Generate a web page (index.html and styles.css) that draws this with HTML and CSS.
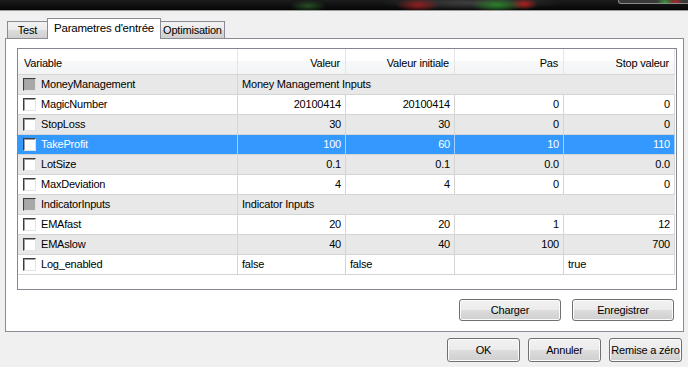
FILE: index.html
```html
<!DOCTYPE html>
<html lang="fr">
	<head>
		<meta charset="UTF-8" />
		<title>Propriétés de l'expert</title>
		<link rel="stylesheet" href="styles.css">
	</head>
	<body>
		<div class="titlebar">
			<div class="caption-btns"></div>
		</div>

		<div class="tabs">
			<div class="tab">Test</div>
			<div class="tab active">Parametres d'entrée</div>
			<div class="tab">Optimisation</div>
		</div>

		<div class="panel">
			<div class="grid">
				<div class="row head">
					<div class="cell left">Variable</div>
					<div class="cell">Valeur</div>
					<div class="cell">Valeur initiale</div>
					<div class="cell">Pas</div>
					<div class="cell">Stop valeur</div>
				</div>

				<div class="row group">
					<div class="cell name"><span class="check"></span>MoneyManagement</div>
					<div class="cell left span">Money Management Inputs</div>
				</div>
				<div class="row">
					<div class="cell name"><span class="check"></span>MagicNumber</div>
					<div class="cell">20100414</div>
					<div class="cell">20100414</div>
					<div class="cell">0</div>
					<div class="cell">0</div>
				</div>
				<div class="row alt">
					<div class="cell name"><span class="check"></span>StopLoss</div>
					<div class="cell">30</div>
					<div class="cell">30</div>
					<div class="cell">0</div>
					<div class="cell">0</div>
				</div>
				<div class="row selected">
					<div class="cell name"><span class="check"></span>TakeProfit</div>
					<div class="cell">100</div>
					<div class="cell">60</div>
					<div class="cell">10</div>
					<div class="cell">110</div>
				</div>
				<div class="row alt">
					<div class="cell name"><span class="check"></span>LotSize</div>
					<div class="cell">0.1</div>
					<div class="cell">0.1</div>
					<div class="cell">0.0</div>
					<div class="cell">0.0</div>
				</div>
				<div class="row">
					<div class="cell name"><span class="check"></span>MaxDeviation</div>
					<div class="cell">4</div>
					<div class="cell">4</div>
					<div class="cell">0</div>
					<div class="cell">0</div>
				</div>
				<div class="row group">
					<div class="cell name"><span class="check"></span>IndicatorInputs</div>
					<div class="cell left span">Indicator Inputs</div>
				</div>
				<div class="row">
					<div class="cell name"><span class="check"></span>EMAfast</div>
					<div class="cell">20</div>
					<div class="cell">20</div>
					<div class="cell">1</div>
					<div class="cell">12</div>
				</div>
				<div class="row alt">
					<div class="cell name"><span class="check"></span>EMAslow</div>
					<div class="cell">40</div>
					<div class="cell">40</div>
					<div class="cell">100</div>
					<div class="cell">700</div>
				</div>
				<div class="row">
					<div class="cell name"><span class="check"></span>Log_enabled</div>
					<div class="cell left">false</div>
					<div class="cell left">false</div>
					<div class="cell left"></div>
					<div class="cell left">true</div>
				</div>
			</div>

			<div class="panel-buttons">
				<button class="btn wide">Charger</button>
				<button class="btn wide">Enregistrer</button>
			</div>
		</div>

		<div class="dialog-buttons">
			<button class="btn">OK</button>
			<button class="btn">Annuler</button>
			<button class="btn">Remise a zéro</button>
		</div>
	</body>
</html>
```

FILE: styles.css
```css
body {
	margin: 0;
	width: 688px;
	height: 367px;
	overflow: hidden;
	background: #f0f0f0;
	font-family: "Liberation Sans", Arial, sans-serif;
	font-size: 11px;
	letter-spacing: -0.2px;
	color: #000;
}

/* dark strip of the window behind (title bar) */
.titlebar {
	display: flex;
	justify-content: flex-end;
	height: 10px;
	border-bottom: 1px solid #9a9a9a;
	background:
		radial-gradient(ellipse 18px 6px at 308px 6px, rgba(60, 140, 60, 0.5), transparent),
		radial-gradient(ellipse 22px 7px at 418px 5px, rgba(170, 30, 30, 0.8), transparent),
		radial-gradient(ellipse 26px 7px at 497px 5px, rgba(40, 150, 40, 0.8), transparent),
		radial-gradient(ellipse 14px 6px at 524px 4px, rgba(190, 30, 30, 0.9), transparent),
		radial-gradient(ellipse 90px 8px at 470px 3px, rgba(90, 90, 90, 0.6), transparent),
		linear-gradient(#1c1c1c, #060606);
}

.caption-btns {
	width: 70px;
	height: 3px;
	margin-right: -2px;
	border: 1px solid #8a8a8a;
	border-top: none;
	border-radius: 0 0 3px 3px;
	background:
		radial-gradient(ellipse 8px 4px at 46px 2px, rgba(60, 170, 60, 0.9), transparent),
		radial-gradient(ellipse 8px 4px at 56px 2px, rgba(190, 40, 40, 0.9), transparent),
		#3a3a3a;
}

/* tabs */
.tabs {
	position: relative;
	z-index: 1;
	display: flex;
	align-items: flex-end;
	height: 21px;
	margin: 7px 0 -1px 7px;
}

.tab {
	box-sizing: border-box;
	min-width: 41px;
	height: 17px;
	margin-bottom: 1px;
	padding: 0 2px;
	border: 1px solid #898c95;
	border-bottom: none;
	background: linear-gradient(#f2f2f2, #ebebeb 50%, #dddddd 50%, #cfcfcf);
	line-height: 16px;
	text-align: center;
	white-space: nowrap;
}

.tab + .tab {
	margin-left: -1px;
}

.tab.active {
	height: 21px;
	margin-bottom: 0;
	padding: 0 6px;
	background: #fff;
	line-height: 19px;
	font-size: 11.5px;
}

/* tab page */
.panel {
	box-sizing: border-box;
	width: 679px;
	height: 294px;
	margin-left: 5px;
	padding: 9px 6px 0 11px;
	border: 1px solid #898c95;
	background: #fff;
}

.grid {
	box-sizing: border-box;
	width: 660px;
	height: 242px;
	border: 1px solid #828790;
	background: #fff;
}

.row {
	display: grid;
	grid-template-columns: 220px 108px 109px 109px 111px;
	box-sizing: border-box;
	width: 657px;
	height: 20px;
	border-bottom: 1px solid #d5d5d5;
}

.cell {
	box-sizing: border-box;
	padding: 0 4px;
	border-right: 1px solid #d5d5d5;
	line-height: 19px;
	text-align: right;
	white-space: nowrap;
	overflow: hidden;
}

.cell.left {
	text-align: left;
}

.cell.span {
	grid-column: span 4;
	border-right: none;
}

.cell.name {
	display: flex;
	align-items: center;
	gap: 5px;
	padding-left: 5px;
	text-align: left;
}

.row.head {
	height: 26px;
	background: linear-gradient(#ffffff, #ffffff 50%, #f7f8f9 50%, #f3f4f5);
}

.row.head .cell {
	padding-top: 3px;
	padding-right: 5px;
	line-height: 22px;
	border-right-color: #e5e5e5;
}

.row.head .cell.left {
	padding-left: 6px;
}

.row.alt,
.row.group {
	background: #e8e8e8;
}

.row.selected {
	background: #3399ff;
	color: #fff;
}

.row.selected .cell {
	border-right-color: #a3d0ff;
}

.check {
	flex: none;
	box-sizing: border-box;
	width: 13px;
	height: 13px;
	border: 1px solid;
	border-color: #3c3c3c #e3e3e3 #e3e3e3 #3c3c3c;
	box-shadow: inset 1px 1px 0 #a0a0a0;
	background: #fff;
}

.row.group .check {
	background: #a8a8a8;
}

/* buttons */
.btn {
	box-sizing: border-box;
	width: 73px;
	height: 24px;
	padding: 0;
	border: 1px solid #707070;
	border-radius: 3px;
	background: linear-gradient(#f2f2f2, #ebebeb 50%, #dddddd 50%, #cfcfcf);
	box-shadow: inset 0 0 0 1px #fbfbfb;
	font-family: inherit;
	font-size: 11px;
	letter-spacing: -0.2px;
	color: #000;
}

.btn.wide {
	width: 102px;
	height: 22px;
}

.panel-buttons {
	display: flex;
	justify-content: flex-end;
	gap: 11px;
	margin-top: 9px;
	padding-right: 3px;
}

.dialog-buttons {
	display: flex;
	justify-content: flex-end;
	gap: 8px;
	margin-top: 6px;
	padding-right: 6px;
}
```
